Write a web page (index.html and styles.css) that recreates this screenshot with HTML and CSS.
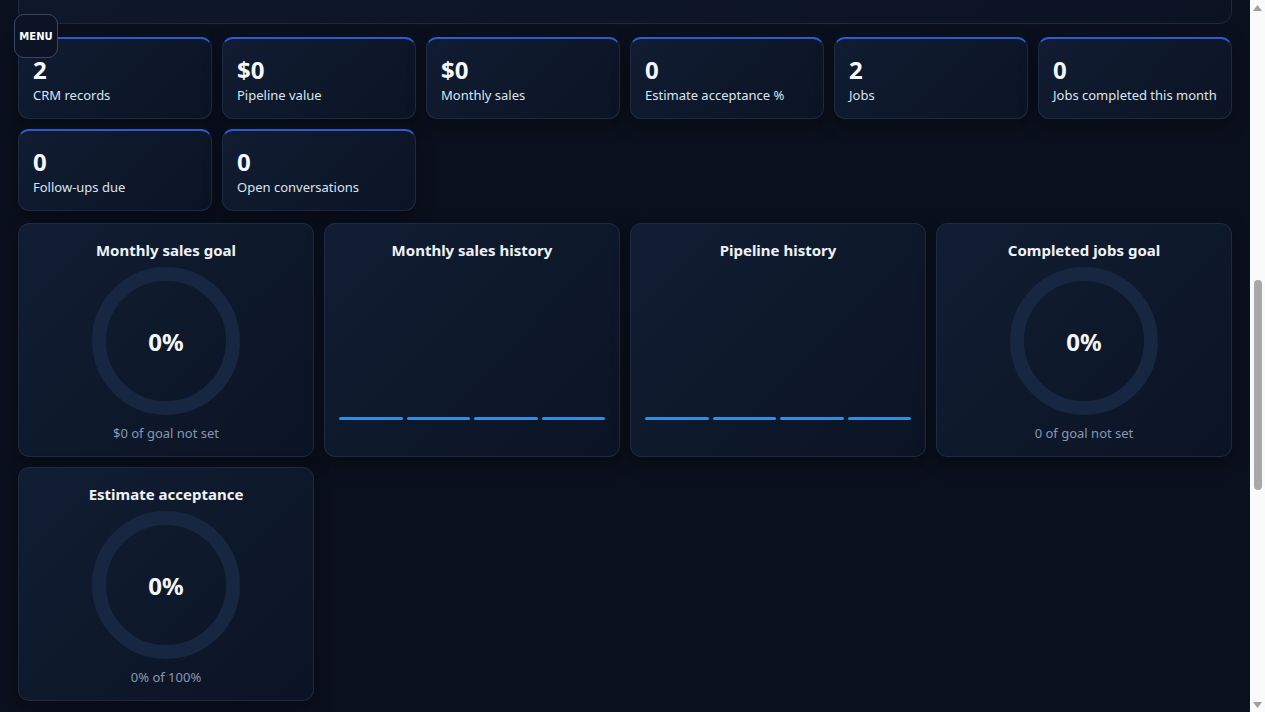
FILE: index.html
```html
<!DOCTYPE html>
<html lang="en">
<head>
  <meta charset="UTF-8" />
  <meta name="viewport" content="width=device-width, initial-scale=1.0" />
  <title>Dashboard</title>
  <link rel="stylesheet" href="styles.css">
</head>
<body>
  <button class="menu-btn">MENU</button>

  <div class="scrollbar">
    <svg class="sb-arrow" width="9" height="6" viewBox="0 0 9 6"><path d="M4.5 0 L9 6 L0 6 Z" fill="#a0a0a0"/></svg>
    <div class="sb-thumb"></div>
    <svg class="sb-arrow down" width="9" height="6" viewBox="0 0 9 6"><path d="M0 0 L9 0 L4.5 6 Z" fill="#a0a0a0"/></svg>
  </div>

  <div class="page">
    <section class="panel" id="overview"></section>

    <div class="stats">
      <div class="stat"><div class="stat-num">2</div><div class="stat-label">CRM records</div></div>
      <div class="stat"><div class="stat-num">$0</div><div class="stat-label">Pipeline value</div></div>
      <div class="stat"><div class="stat-num">$0</div><div class="stat-label">Monthly sales</div></div>
      <div class="stat"><div class="stat-num">0</div><div class="stat-label">Estimate acceptance %</div></div>
      <div class="stat"><div class="stat-num">2</div><div class="stat-label">Jobs</div></div>
      <div class="stat"><div class="stat-num">0</div><div class="stat-label">Jobs completed this month</div></div>
      <div class="stat"><div class="stat-num">0</div><div class="stat-label">Follow-ups due</div></div>
      <div class="stat"><div class="stat-num">0</div><div class="stat-label">Open conversations</div></div>
    </div>

    <div class="charts">
      <div class="chart">
        <h3>Monthly sales goal</h3>
        <div class="donut"><span>0%</span></div>
        <div class="chart-sub">$0 of goal not set</div>
      </div>
      <div class="chart">
        <h3>Monthly sales history</h3>
        <div class="bars">
          <div class="bar"></div><div class="bar"></div><div class="bar"></div><div class="bar"></div>
        </div>
      </div>
      <div class="chart">
        <h3>Pipeline history</h3>
        <div class="bars">
          <div class="bar"></div><div class="bar"></div><div class="bar"></div><div class="bar"></div>
        </div>
      </div>
      <div class="chart">
        <h3>Completed jobs goal</h3>
        <div class="donut"><span>0%</span></div>
        <div class="chart-sub">0 of goal not set</div>
      </div>
      <div class="chart">
        <h3>Estimate acceptance</h3>
        <div class="donut"><span>0%</span></div>
        <div class="chart-sub">0% of 100%</div>
      </div>
    </div>
  </div>

  <script>
    // jump to the stats section, like the saved scroll position
    const panel = document.getElementById('overview');
    const bottom = panel.getBoundingClientRect().bottom + window.scrollY;
    window.scrollTo(0, bottom - 24);
  </script>
</body>
</html>
```

FILE: styles.css
```css
html {
  background: #0a101d;
}
body {
  margin: 0;
  background: #0a101d;
  color: #e8edf6;
  font-family: "Noto Sans", "Open Sans", sans-serif;
}
.page {
  padding: 18px 33px 765px 18px;
}

/* window scrollbar, drawn over the right edge */
.scrollbar {
  position: fixed;
  top: 0;
  right: 0;
  width: 15px;
  height: 100vh;
  background: #fafafa;
  display: flex;
  flex-direction: column;
  align-items: center;
  z-index: 20;
}
.sb-arrow {
  display: block;
  flex: none;
  margin-top: 5px;
}
.sb-arrow.down {
  margin-top: auto;
  margin-bottom: 4px;
}
.sb-thumb {
  margin-top: 269px;
  width: 8px;
  height: 210px;
  border-radius: 4px;
  background: #a8a8a8;
}

.menu-btn {
  position: fixed;
  top: 14px;
  left: 14px;
  width: 44px;
  height: 44px;
  padding: 0;
  border-radius: 10px;
  border: 1px solid #3b4660;
  background: #0c1324;
  color: #fff;
  font-family: "DejaVu Sans", sans-serif;
  font-weight: 900;
  font-size: 10px;
  z-index: 10;
}
.panel {
  height: 954px;
  border: 1px solid #1e2a42;
  border-radius: 12px;
  background: linear-gradient(135deg, #111c31, #0b1323);
}
.stats {
  display: grid;
  grid-template-columns: repeat(6, 1fr);
  gap: 10px;
  margin-top: 13px;
}
.stat {
  height: 82px;
  box-sizing: border-box;
  padding: 18px 14px 0;
  border: 1px solid #1e2a42;
  border-top: 2px solid #2c5ad0;
  border-radius: 11px;
  background: linear-gradient(135deg, #111c32, #0b1424);
  box-shadow: 0 6px 18px rgba(0, 0, 0, 0.35);
}
.stat-num {
  font-size: 24px;
  font-weight: 700;
  line-height: 26px;
  color: #f4f7fc;
}
.stat-label {
  margin-top: 3px;
  font-size: 13px;
  line-height: 18px;
  color: #dce3ee;
}
.charts {
  display: grid;
  grid-template-columns: repeat(4, 1fr);
  gap: 10px;
  margin-top: 12px;
}
.chart {
  box-sizing: border-box;
  height: 234px;
  padding: 16px 14px 0;
  border: 1px solid #1e2a42;
  border-radius: 11px;
  background: linear-gradient(135deg, #111d33, #0b1424);
  box-shadow: 0 6px 18px rgba(0, 0, 0, 0.35);
  display: flex;
  flex-direction: column;
  align-items: center;
}
.chart h3 {
  margin: 0;
  font-size: 15px;
  line-height: 20px;
  font-weight: 700;
  color: #eef2f8;
}
.donut {
  margin-top: 7px;
  width: 148px;
  height: 148px;
  box-sizing: border-box;
  border: 14px solid #172641;
  border-radius: 50%;
  display: flex;
  align-items: center;
  justify-content: center;
}
.donut span {
  font-size: 24px;
  font-weight: 700;
  color: #f4f7fc;
}
.chart-sub {
  margin-top: 9px;
  font-size: 13px;
  line-height: 18px;
  color: #8797b0;
}
.bars {
  margin-top: 7px;
  width: 100%;
  height: 153px;
  display: flex;
  align-items: flex-end;
  gap: 4px;
}
.bar {
  flex: 1;
  height: 3px;
  border-radius: 2px;
  background: #2e8fe0;
}
```
